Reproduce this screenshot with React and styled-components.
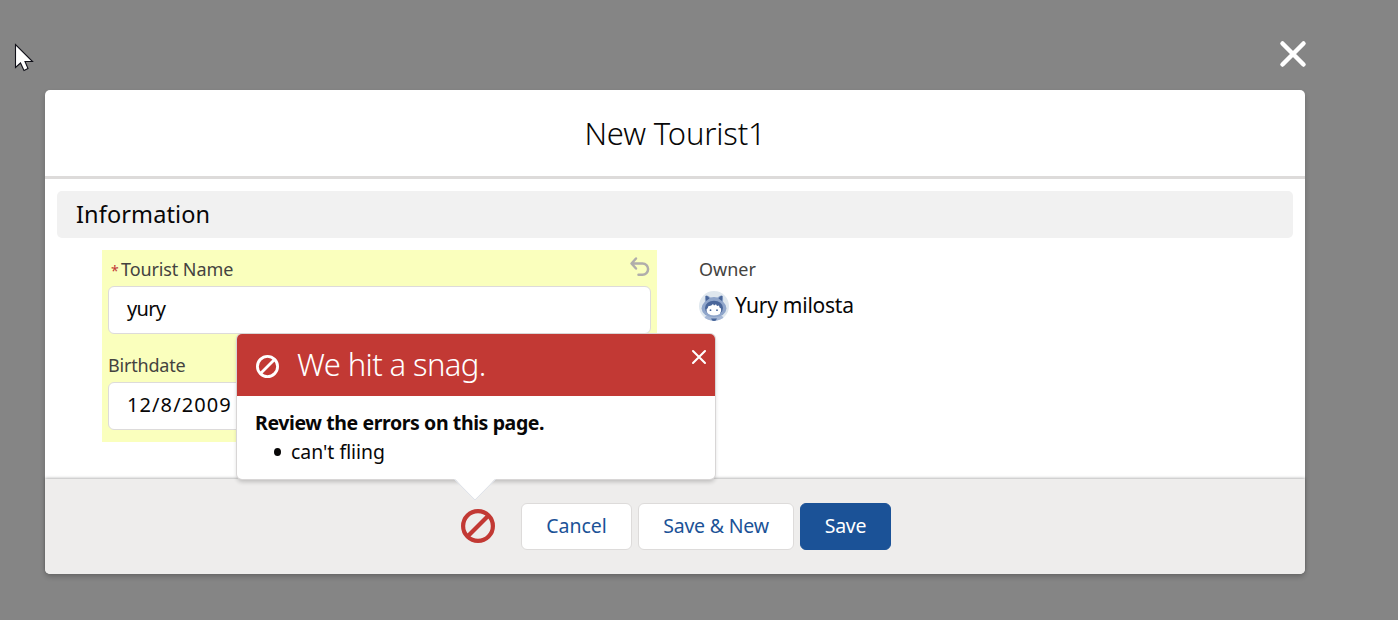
import React from "react";
import styled, { createGlobalStyle } from "styled-components";

const Global = createGlobalStyle`
  *, *::before, *::after { box-sizing: border-box; }
  body { margin: 0; background: #858585; font-family: "Noto Sans", "Open Sans", sans-serif; color: #080707; overflow: hidden; }
  h1, h2, h3, p, ul { margin: 0; padding: 0; font-weight: 400; }
  button, input { font: inherit; color: inherit; }
`;

const Backdrop = styled.div`
  position: relative;
  height: 620px;
  padding: 90px 93px 46px 45px;
  background: #858585;
`;

const Text = styled.span`
  display: inline-block;
  white-space: nowrap;
  letter-spacing: ${(p) => (p.$track ? `${p.$track}px` : "normal")};
`;

const Cursor = styled.svg`
  position: absolute;
  left: 14px;
  top: 43px;
`;

const CloseModal = styled.button`
  position: absolute;
  left: 1279px;
  top: 40px;
  width: 28px;
  height: 28px;
  padding: 0;
  border: 0;
  background: none;
  svg { display: block; }
`;

const Modal = styled.section`
  position: relative;
  display: flex;
  flex-direction: column;
  height: 484px;
  border-radius: 5px;
  background: #fff;
  box-shadow: 0 3px 5px rgba(0, 0, 0, 0.2);
`;

const ModalHeader = styled.header`
  display: flex;
  align-items: center;
  justify-content: center;
  height: 89px;
  border-bottom: 3px solid #dddbda;
  padding-bottom: 1px;
`;

const Title = styled.h1`
  font-size: 31px;
  font-weight: 270;
  line-height: 40px;
`;

const ModalBody = styled.div`
  flex: 1;
  padding: 12px 12px 0;
`;

const SectionTitle = styled.h2`
  height: 47px;
  padding-left: 19px;
  border-radius: 5px;
  background: #f1f1f1;
  font-size: 23.5px;
  line-height: 47px;
`;

const Columns = styled.div`
  display: grid;
  grid-template-columns: 555px 1fr;
  column-gap: 42px;
  padding: 12px 0 0 45px;
`;

const EditedFields = styled.div`
  height: 192px;
  padding: 0 6px;
  background: #faffbd;
`;

const Field = styled.div`
  height: 96px;
`;

const LabelRow = styled.div`
  display: flex;
  justify-content: space-between;
  height: 36px;
  padding-left: ${(p) => (p.$required ? 3 : 0)}px;
  color: #444340;
  font-size: 18px;
  line-height: 39px;
`;

const Required = styled.span`
  display: inline-block;
  width: 10px;
  color: #c23934;
  font-size: 14px;
  line-height: 37px;
`;

const UndoIcon = styled.svg`
  margin: 6px 0 0;
`;

const InputBox = styled.div`
  height: 48px;
  padding-left: 18px;
  border: 1px solid #dddbda;
  border-radius: 6px;
  background: #fff;
  font-size: 20px;
  line-height: 44px;
`;

const OwnerRow = styled.div`
  display: flex;
  align-items: center;
  gap: 6px;
  height: 38px;
  font-size: 21px;
  svg { position: relative; top: 1px; }
`;

const ModalFooter = styled.footer`
  display: flex;
  gap: 6px;
  height: 95px;
  padding: 24px 0 0 416px;
  border-radius: 0 0 5px 5px;
  background: #eeedec;
  box-shadow: 0 -1px 3px rgba(0, 0, 0, 0.28);
`;

const FooterError = styled.div`
  width: 54px;
  padding-top: 6px;
  svg { display: block; }
`;

const Button = styled.button`
  width: ${(p) => p.$width}px;
  height: 47px;
  padding: 0 0 2px;
  border: 1px solid ${(p) => (p.$brand ? "#1b5297" : "#dddbda")};
  border-radius: 6px;
  background: ${(p) => (p.$brand ? "#1b5297" : "#fff")};
  color: ${(p) => (p.$brand ? "#fff" : "#1b5297")};
  font-size: 19.5px;
`;

const Popover = styled.aside`
  position: absolute;
  left: 192px;
  top: 244px;
  width: 478px;
  height: 145px;
  border-radius: 5px;
  background: #fff;
  box-shadow: 0 0 0 1px #d8d6d6, 0 3px 4px rgba(0, 0, 0, 0.2);
`;

const PopoverHeader = styled.header`
  display: flex;
  height: 62px;
  padding: 0 8px 0 18px;
  border-radius: 5px 5px 0 0;
  background: #c23934;
  color: #fff;
`;

const PopoverIcon = styled.div`
  width: 42px;
  padding: 20.5px 0 0 0.5px;
  svg { display: block; }
`;

const PopoverTitle = styled.h2`
  flex: 1;
  font-size: 31px;
  font-weight: 270;
  line-height: 60px;
`;

const PopoverClose = styled.button`
  height: 16px;
  margin-top: 15px;
  padding: 0;
  border: 0;
  background: none;
  svg { display: block; }
`;

const PopoverBody = styled.div`
  padding: 12px 18px 0;
  font-size: 19.5px;
  line-height: 29px;
`;

const Strong = styled.p`
  font-weight: 700;
`;

const ErrorItem = styled.li`
  display: flex;
  align-items: center;
  gap: 10px;
  padding-left: 19px;
  font-size: 19.4px;
  &::before {
    content: "";
    width: 7px;
    height: 8px;
    border-radius: 50%;
    background: #080707;
  }
`;

const Nubbin = styled.svg`
  position: absolute;
  left: 216px;
  top: 144px;
`;

const Ban = ({ size, color, stroke }) => (
  <svg width={size} height={size} viewBox="0 0 34 34" fill="none" stroke={color} strokeWidth={stroke}>
    <circle cx="17" cy="17" r={17 - stroke / 2} />
    <path d="M7 27L27 7" />
  </svg>
);

const Cross = ({ size, stroke }) => (
  <svg width={size} height={size} viewBox="0 0 28 28" stroke="#fff" strokeWidth={stroke} strokeLinecap="round">
    <path d="M3.500 3.500L24.500 24.500M24.500 3.500L3.500 24.500" />
  </svg>
);

const Avatar = () => (
  <svg width="30" height="30" viewBox="0 0 30 30">
    <defs>
      <clipPath id="face"><circle cx="15" cy="15" r="15" /></clipPath>
    </defs>
    <g clipPath="url(#face)">
      <rect width="30" height="30" fill="#dfe7ee" />
      <path d="M4 30Q5 23 15 23Q25 23 26 30Z" fill="#a5b7d5" />
      <path d="M6.500 5Q8 3.500 11.500 6.500Q15 5.500 18.500 6.500Q22 3.500 23.500 5Q24.500 8 24 10.500Q27.500 14 27.500 17.500Q26.500 26 15 26Q3.500 26 2.500 17.500Q2.500 14 6 10.500Q5.500 8 6.500 5Z" fill="#8fa5ca" />
      <path d="M6.500 5Q8.500 4 10.500 7.500L7 10ZM23.500 5Q21.500 4 19.500 7.500L23 10Z" fill="#49669a" />
      <ellipse cx="15" cy="17" rx="9" ry="7.300" fill="#49669a" />
      <path d="M7.500 18.500Q9 17 9.500 15Q12 15.500 14 13L15 14.500L17 13.200L18 15L20 14.500L20.500 16.500L22 17.500Q23.500 24 15 24.500Q7 24 7.500 18.500Z" fill="#fff" />
      <circle cx="11.500" cy="19.200" r="0.900" fill="#49669a" />
      <circle cx="18" cy="19.200" r="0.900" fill="#49669a" />
      <path d="M12 27.500H18L16.500 30H13.500Z" fill="#49669a" />
    </g>
  </svg>
);

export default function App() {
  return (
    <Backdrop>
      <Global />
      <Cursor width="20" height="30" viewBox="0 0 20 30">
        <path d="M1.500 1.500V24.500L6.500 20L10 27.500L14 25.500L11 18.500H18.500Z" fill="#fff" stroke="#101018" strokeWidth="1.100" />
      </Cursor>
      <CloseModal aria-label="Close"><Cross size={28} stroke={4.5} /></CloseModal>
      <Modal>
        <ModalHeader><Title><Text $track={-0.18}>New Tourist1</Text></Title></ModalHeader>
        <ModalBody>
          <SectionTitle><Text $track={0.12}>Information</Text></SectionTitle>
          <Columns>
            <EditedFields>
              <Field>
                <LabelRow $required>
                  <div><Required>*</Required><Text $track={-0.1}>Tourist Name</Text></div>
                  <UndoIcon width="22" height="22" viewBox="0 0 22 22" fill="none" stroke="#b0adab" strokeWidth="2.500">
                    <path d="M7 2.500L2.500 7.500L7 12.500M3 7.500H13.500A5.600 5.600 0 0 1 13.500 18.700H9.500" strokeLinecap="round" strokeLinejoin="round" />
                  </UndoIcon>
                </LabelRow>
                <InputBox><Text $track={-0.7}>yury</Text></InputBox>
              </Field>
              <Field>
                <LabelRow><Text $track={-0.2}>Birthdate</Text></LabelRow>
                <InputBox><Text $track={1.1}>12/8/2009</Text></InputBox>
              </Field>
            </EditedFields>
            <div>
              <LabelRow><Text>Owner</Text></LabelRow>
              <OwnerRow><Avatar /><Text $track={-0.25}>Yury milosta</Text></OwnerRow>
            </div>
          </Columns>
        </ModalBody>
        <ModalFooter>
          <FooterError><Ban size={34} color="#c23934" stroke={4.2} /></FooterError>
          <Button $width={111}><Text>Cancel</Text></Button>
          <Button $width={156}><Text $track={-0.2}>Save &amp; New</Text></Button>
          <Button $width={91} $brand><Text $track={-0.2}>Save</Text></Button>
        </ModalFooter>
        <Popover>
          <PopoverHeader>
            <PopoverIcon><Ban size={23} color="#fff" stroke={4.2} /></PopoverIcon>
            <PopoverTitle><Text $track={-0.6}>We hit a snag.</Text></PopoverTitle>
            <PopoverClose aria-label="Close"><Cross size={16} stroke={3.6} /></PopoverClose>
          </PopoverHeader>
          <PopoverBody>
            <Strong><Text $track={-0.4}>Review the errors on this page.</Text></Strong>
            <ul><ErrorItem><Text>can't fliing</Text></ErrorItem></ul>
          </PopoverBody>
          <Nubbin width="44" height="23" viewBox="0 0 44 23">
            <path d="M1 0L22 21.500L43 0Z" fill="#fff" />
            <path d="M1 1L22 22L43 1" fill="none" stroke="#dfe3ea" />
          </Nubbin>
        </Popover>
      </Modal>
    </Backdrop>
  );
}
